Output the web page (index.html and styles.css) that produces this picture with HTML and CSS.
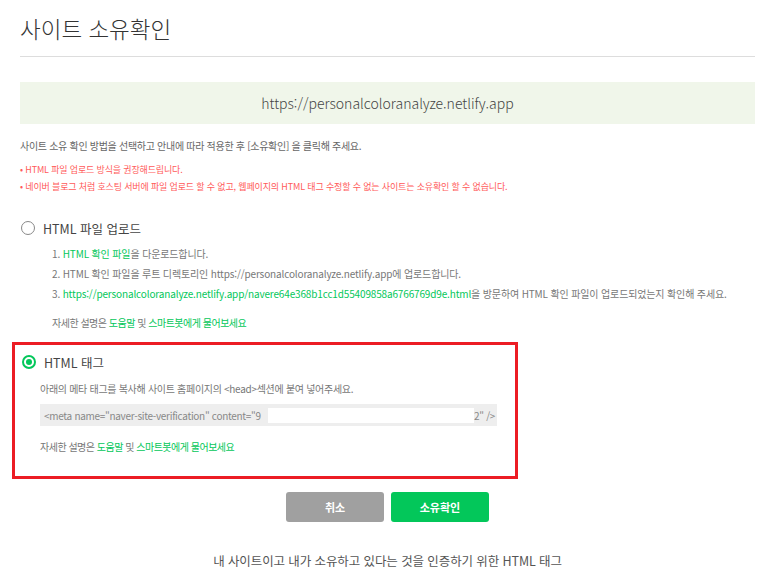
FILE: index.html
```html
<!DOCTYPE html>
<html lang="ko">
<head>
<meta charset="utf-8">
<title>사이트 소유확인</title>
<link rel="stylesheet" href="styles.css">
</head>
<body>
<div class="page">
  <h1 class="title">사이트 소유확인</h1>
  <div class="site-url">https://personalcoloranalyze.netlify.app</div>
  <p class="intro">사이트 소유 확인 방법을 선택하고 안내에 따라 적용한 후 [소유확인] 을 클릭해 주세요.</p>
  <ul class="notes">
    <li>HTML 파일 업로드 방식을 권장해드립니다.</li>
    <li>네이버 블로그 처럼 호스팅 서버에 파일 업로드 할 수 없고, 웹페이지의 HTML 태그 수정할 수 없는 사이트는 소유확인 할 수 없습니다.</li>
  </ul>

  <div class="option">
    <label class="option-head"><span class="radio"></span><span class="option-label">HTML 파일 업로드</span></label>
    <ol class="steps">
      <li>1. <a class="link">HTML 확인 파일</a>을 다운로드합니다.</li>
      <li>2. HTML 확인 파일을 루트 디렉토리인 https://personalcoloranalyze.netlify.app에 업로드합니다.</li>
      <li>3. <a class="link">https://personalcoloranalyze.netlify.app/navere64e368b1cc1d55409858a6766769d9e.html</a>을 방문하여 HTML 확인 파일이 업로드되었는지 확인해 주세요.</li>
    </ol>
    <p class="help">자세한 설명은 <a class="link">도움말</a> 및 <a class="link">스마트봇에게 물어보세요</a></p>
  </div>

  <div class="option option-selected">
    <label class="option-head"><span class="radio radio-on"></span><span class="option-label">HTML 태그</span></label>
    <p class="desc">아래의 메타 태그를 복사해 사이트 홈페이지의 &lt;head&gt;섹션에 붙여 넣어주세요.</p>
    <div class="meta-box"><span class="meta-text">&lt;meta name="naver-site-verification" content="9</span><span class="redact"></span><span>2" /&gt;</span></div>
    <p class="help help-tag">자세한 설명은 <a class="link">도움말</a> 및 <a class="link">스마트봇에게 물어보세요</a></p>
  </div>

  <div class="actions">
    <button class="btn btn-cancel">취소</button>
    <button class="btn btn-ok">소유확인</button>
  </div>

  <p class="caption">내 사이트이고 내가 소유하고 있다는 것을 인증하기 위한 HTML 태그</p>
</div>
</body>
</html>
```

FILE: styles.css
```css
html, body {
  margin: 0;
  padding: 0;
  background: #fff;
}
body {
  font-family: "Noto Sans CJK KR", "Noto Sans", sans-serif;
  color: #666;
}
.page {
  width: 735px;
  margin-left: 20px;
}
.title {
  margin: 12px 0 0;
  font-size: 22.5px;
  line-height: 32px;
  font-weight: 300;
  color: #333;
  padding-bottom: 12px;
  border-bottom: 1px solid #ddd;
}
.site-url {
  margin-top: 25px;
  height: 42px;
  line-height: 42px;
  background: #f0f6ea;
  text-align: center;
  font-size: 14px;
  color: #444;
  font-weight: 300;
}
.intro {
  margin: 14px 0 0;
  font-size: 10px;
  letter-spacing: -0.3px;
  line-height: 16px;
  color: #666;
}
.notes {
  list-style: none;
  margin: 7px 0 0;
  padding: 0;
  font-size: 9px;
  letter-spacing: -0.15px;
  line-height: 17px;
  color: #ff5a5a;
}
.notes li::before {
  content: "• ";
}
.option {
  margin-top: 25px;
}
.option-head {
  display: flex;
  align-items: center;
  gap: 8px;
  height: 16px;
  margin-left: 1px;
}
.radio {
  box-sizing: border-box;
  width: 14px;
  height: 14px;
  border: 1.5px solid #888;
  border-radius: 50%;
  display: flex;
  align-items: center;
  justify-content: center;
}
.radio-on {
  border: 2px solid #03c75a;
}
.radio-on::after {
  content: "";
  width: 6px;
  height: 6px;
  border-radius: 50%;
  background: #03c75a;
}
.option-label {
  font-size: 12.5px;
  color: #444;
}
.steps {
  list-style: none;
  margin: 8px 0 0;
  padding: 0 0 0 32px;
  font-size: 10px;
  letter-spacing: -0.15px;
  line-height: 20px;
  color: #777;
  white-space: nowrap;
}
.link {
  color: #03c75a;
  text-decoration: none;
}
.help {
  margin: 9px 0 0 32px;
  font-size: 10px;
  letter-spacing: -0.5px;
  line-height: 20px;
  color: #777;
}
.option-selected {
  margin: 9px 0 0 -8px;
  width: 494px;
  border: 3px solid #ec1c24;
  padding: 9px 0 19px 6px;
}
.desc {
  margin: 9px 0 0 19px;
  font-size: 10px;
  letter-spacing: -0.3px;
  line-height: 20px;
  color: #777;
}
.meta-box {
  margin: 5px 0 0 19px;
  width: 457px;
  height: 22px;
  box-sizing: border-box;
  background: #eee;
  display: flex;
  align-items: center;
  padding-left: 4px;
  font-size: 10px;
  letter-spacing: -0.3px;
  color: #888;
  white-space: nowrap;
}
.meta-text {
  width: 224px;
  overflow: hidden;
}
.redact {
  width: 206px;
  height: 15px;
  background: #fff;
}
.help-tag {
  margin: 11px 0 0 19px;
}
.actions {
  margin-top: 13px;
  display: flex;
  justify-content: center;
  gap: 7px;
}
.btn {
  width: 98px;
  height: 30px;
  border: none;
  border-radius: 3px;
  color: #fff;
  font-family: inherit;
  font-size: 11px;
  font-weight: 700;
}
.btn-cancel {
  background: #a0a0a0;
}
.btn-ok {
  background: #03c75a;
}
.caption {
  margin: 29px 0 0;
  text-align: center;
  font-size: 12.5px;
  letter-spacing: -0.1px;
  line-height: 20px;
  color: #555;
}
```
